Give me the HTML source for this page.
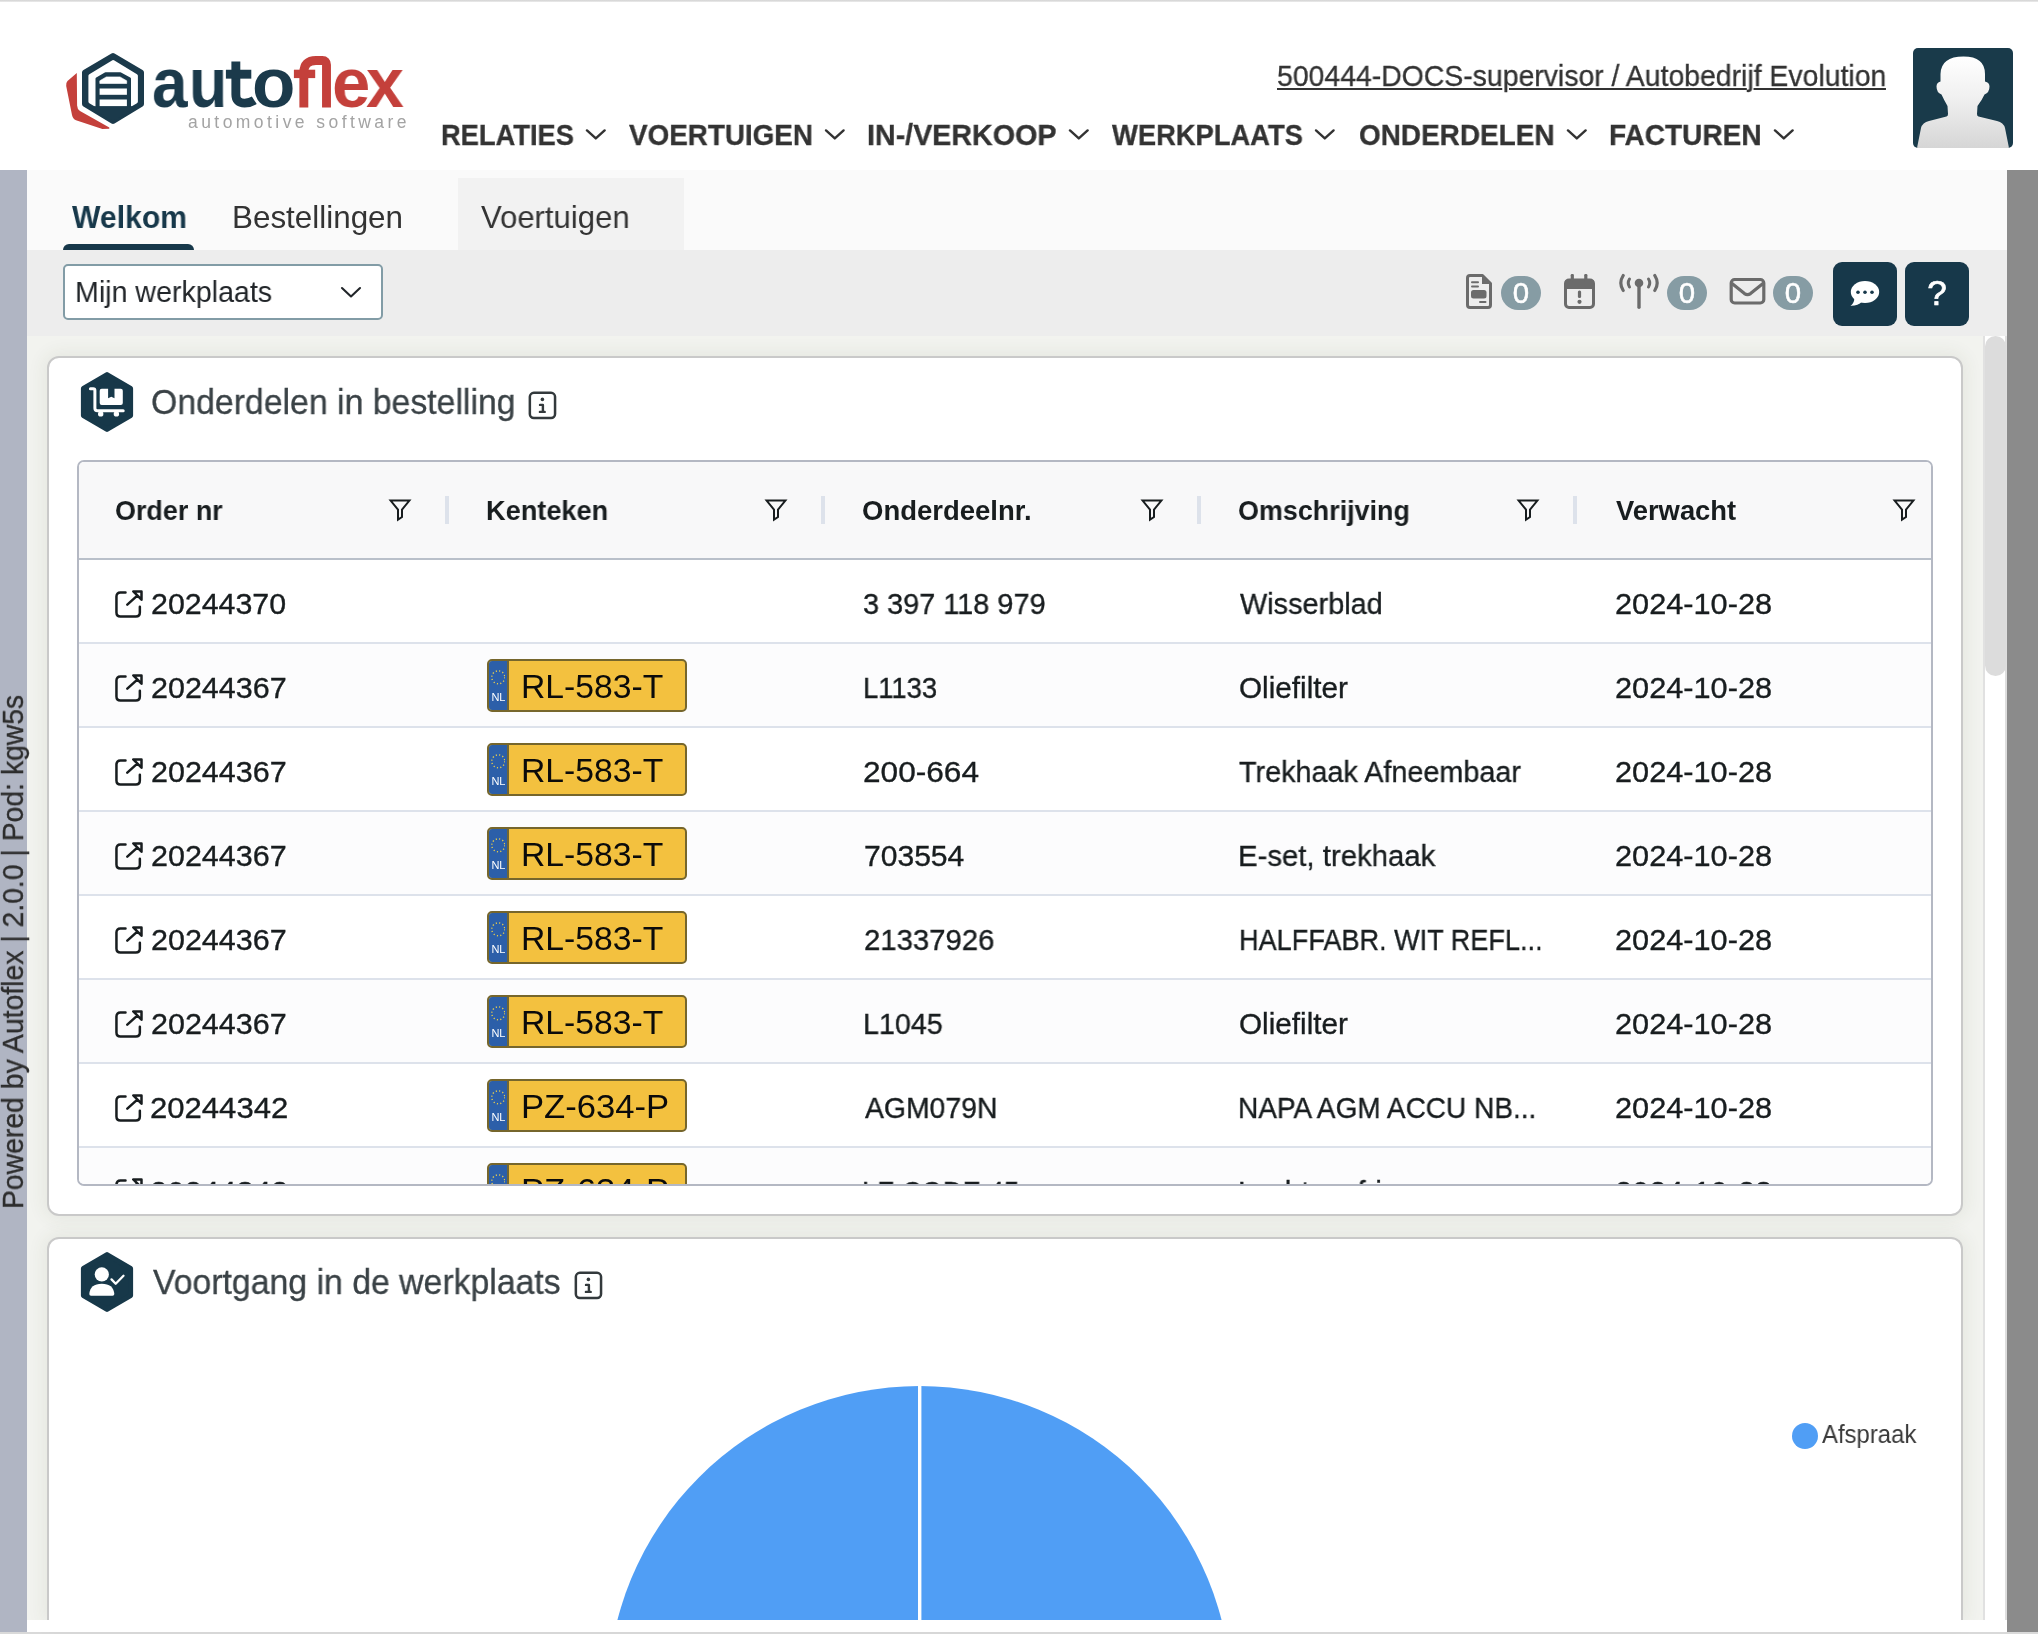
<!DOCTYPE html>
<html lang="nl">
<head>
<meta charset="utf-8">
<title>Autoflex</title>
<style>
*{box-sizing:border-box;margin:0;padding:0}
html,body{width:2038px;height:1634px;overflow:hidden;background:#fff}
body{font-family:"Liberation Sans",sans-serif;color:#333;position:relative}
.abs{position:absolute}
.t,.hc,.c,.pt,.nl{will-change:transform}
.t{position:absolute;white-space:nowrap;line-height:1}
/* frame */
#topline{left:0;top:0;width:2038px;height:2px;background:linear-gradient(#d2d2d2,#ececec)}
#botline{left:0;top:1632px;width:2038px;height:2px;background:#d9d9d9}
#lstrip{left:0;top:170px;width:27px;height:1462px;background:#b0b5c3}
#rstrip{left:2007px;top:170px;width:31px;height:1462px;background:#8b8b8b}
#tabbar{left:27px;top:170px;width:1980px;height:80px;background:#fafafa}
#toolbar{left:27px;top:250px;width:1980px;height:86px;background:#ededed}
#content{left:27px;top:336px;width:1956px;height:1284px;background:#f2f3ef;overflow:hidden}
#sbtrack{left:1983px;top:336px;width:24px;height:1284px;background:#fff;border-left:2px solid #e1e1e1;border-right:2px solid #dedede}
#sbthumb{left:1985px;top:336px;width:21px;height:340px;background:#dcdcdc;border-radius:11px}
.lgl{font-weight:bold;font-size:71px}
#lstrip,#rstrip,#sbtrack,#sbthumb{z-index:2}
#side{z-index:3}
/* nav */
.nav{font-weight:bold;font-size:28.5px;color:#333;top:121px;-webkit-text-stroke:0.3px #333}
.chev{position:absolute;top:127.6px;width:21.6px;height:13px}
/* tabs */
.tab{font-size:30px;top:201px;color:#333}
.badge{width:40px;height:34px;border-radius:17px/17px;background:#869ca4}
.bnum{width:40px;text-align:center;top:277.5px;font-size:29.4px;color:#fff;-webkit-text-stroke:0.5px #fff}
/* panels */
.panel{position:absolute;left:47px;width:1916px;background:#fff;border:2px solid #c9c9c9;border-radius:12px;box-shadow:0 0 18px 3px rgba(70,75,40,0.075)}
.ptitle{font-size:34px;color:#3a4246;-webkit-text-stroke:0.3px #3a4246}
/* table */
#grid{left:77px;top:460px;width:1856px;height:726px;border:2px solid #b4b8c3;border-radius:7px;overflow:hidden;background:#fff}
#ghead{left:0;top:0;width:1852px;height:98px;background:#f8f8f9;border-bottom:2px solid #b9c0ca}
.hc{position:absolute;top:35px;font-weight:bold;font-size:26.5px;color:#181d1f;white-space:nowrap;line-height:1}
.sep{position:absolute;top:34px;width:4px;height:28px;background:#dde2eb}
.flt{position:absolute;top:36px;width:24px;height:24px}
.row{position:absolute;left:0;width:1852px;height:84px;border-bottom:2px solid #dde2eb;background:#fff}
.row.alt{background:#fcfcfd}
.c{position:absolute;top:27px;font-size:28px;color:#181d1f;white-space:nowrap;line-height:1;-webkit-text-stroke:0.35px #181d1f}
.ext{position:absolute;left:35px;top:28.6px;width:30px;height:30px}
.plate{position:absolute;left:408px;top:15px;width:200px;height:53px;background:#f3c13f;border:2px solid #76662c;border-radius:5px;overflow:hidden}
.plate .eu{position:absolute;left:0;top:0;width:20px;height:49px;background:#2c5fa9;border-right:2px solid #6f6636}
.plate .nl{position:absolute;left:0;width:18.6px;text-align:center;top:30.7px;font-size:11px;color:#fff;line-height:1;letter-spacing:-0.3px}
.plate .stars{position:absolute;left:1.7px;top:9.2px;width:14.6px;height:14.6px}
.plate .pt{position:absolute;left:36px;top:8px;font-size:32px;color:#0b0b0b;line-height:1;white-space:nowrap}
</style>
</head>
<body>
<div class="abs" id="topline"></div>
<div class="abs" id="lstrip"></div>
<div class="abs" id="rstrip"></div>
<div class="abs" id="tabbar"></div>
<div class="abs" id="toolbar"></div>
<div class="abs" id="content"></div>
<div class="abs" id="sbtrack"></div>
<div class="abs" id="sbthumb"></div>
<div class="abs" id="botline"></div>


<!-- logo -->
<svg class="abs" style="left:60px;top:45px" width="360" height="95" viewBox="60 45 360 95">
  <path d="M76.8,73.1 L67.5,81 Q65.7,83 66.2,86 L72,115 Q72.8,119 76,120.2 L102.4,129 L109.3,128.7 L109.3,127.6 L80,111 Q77.2,109.3 77.1,105.6 Z" fill="#c4403b"/>
  <polygon points="113,56 141,72.6 141,104 113,121 85,104 85,72.6" fill="#1b3a4b" stroke="#1b3a4b" stroke-width="6" stroke-linejoin="round"/>
  <polygon points="113,62 136,75.8 136,101.6 113,115 90.3,101.6 90.3,75.8" fill="#fff" stroke="#fff" stroke-width="3.8" stroke-linejoin="round"/>
  <polygon points="97,78.8 105.6,73.8 120.3,73.8 129.5,78.8 129.5,111 113,120 97,111" fill="#1b3a4b" stroke="#1b3a4b" stroke-width="3" stroke-linejoin="round"/>
  <polygon points="85,106.2 141,106.2 141,104 113,121 85,104" fill="#1b3a4b"/>
  <polygon points="106.3,76.9 120,76.9 126.7,80.8 126.7,83.5 99.8,83.5 99.8,80.8" fill="#fff" stroke="#fff" stroke-width="0.6" stroke-linejoin="round"/>
  <rect x="99.6" y="88.5" width="27.3" height="6.3" fill="#fff"/>
  <rect x="99.6" y="99.5" width="27.3" height="6.6" fill="#fff"/>
  <g fill="none" stroke-width="8.9">
    <path d="M235.85,61.5 V94.5 Q235.85,103.1 244.6,103.1 Q250,103.1 254.3,100.3" stroke="#1b3a4b"/>
    <path d="M225.9,74.2 H251.3" stroke="#1b3a4b"/>
    <path d="M303.85,107.5 V72.5 Q303.85,60.5 316,60.5 H322.3 Q326.5,60.5 326.5,64.8 V107.5" stroke="#c4403b" stroke-linejoin="round"/>
    <path d="M293.9,73.9 H315.2" stroke="#c4403b" stroke-width="8.4"/>
  </g>
  
</svg>


<div class="t lgl" id="lg_a" style="left:151.6px;top:47.4px;color:#1b3a4b;transform:scaleX(0.9);transform-origin:0 0">a</div>
<div class="t lgl" id="lg_u" style="left:188.7px;top:47.4px;color:#1b3a4b;transform:scaleX(0.883);transform-origin:0 0">u</div>
<div class="t lgl" id="lg_o" style="left:252.4px;top:47.4px;color:#1b3a4b;transform:scaleX(0.995);transform-origin:0 0">o</div>
<div class="t lgl" id="lg_e" style="left:332.2px;top:47.4px;color:#c4403b;transform:scaleX(0.968);transform-origin:0 0">e</div>
<div class="t lgl" id="lg_x" style="left:366.4px;top:47.4px;color:#c4403b;transform:scaleX(0.958);transform-origin:0 0">x</div>
<div class="t" id="lg_sub" style="left:188px;top:113.8px;font-size:17.5px;color:#a3a3a3;letter-spacing:3.44px">automotive software</div>
<div class="t" id="user" style="left:1276.9px;top:60.9px;font-size:29.5px;color:#333;text-decoration:underline;text-decoration-thickness:2px;text-underline-offset:2px;transform:scaleX(0.9626);transform-origin:0 0;-webkit-text-stroke:0.3px #333">500444-DOCS-supervisor / Autobedrijf Evolution</div>

<div class="t nav" id="n1" style="left:441.3px;top:119.7px;font-size:29.9px;transform:scaleX(0.9126);transform-origin:0 0">RELATIES</div>
<div class="t nav" id="n2" style="left:629.0px;top:119.7px;font-size:29.9px;transform:scaleX(0.9311);transform-origin:0 0">VOERTUIGEN</div>
<div class="t nav" id="n3" style="left:867.4px;top:119.7px;font-size:29.9px;transform:scaleX(0.9585);transform-origin:0 0">IN-/VERKOOP</div>
<div class="t nav" id="n4" style="left:1112.3px;top:119.7px;font-size:29.9px;transform:scaleX(0.9149);transform-origin:0 0">WERKPLAATS</div>
<div class="t nav" id="n5" style="left:1359.2px;top:119.7px;font-size:29.9px;transform:scaleX(0.9343);transform-origin:0 0">ONDERDELEN</div>
<div class="t nav" id="n6" style="left:1608.9px;top:119.7px;font-size:29.9px;transform:scaleX(0.9371);transform-origin:0 0">FACTUREN</div>
<svg class="chev" style="left:584.8px" viewBox="0 0 21.6 13"><path d="M2 2.4 L10.8 10.4 L19.6 2.4" fill="none" stroke="#333" stroke-width="2.4" stroke-linecap="round" stroke-linejoin="round"/></svg>
<svg class="chev" style="left:824.0px" viewBox="0 0 21.6 13"><path d="M2 2.4 L10.8 10.4 L19.6 2.4" fill="none" stroke="#333" stroke-width="2.4" stroke-linecap="round" stroke-linejoin="round"/></svg>
<svg class="chev" style="left:1067.8px" viewBox="0 0 21.6 13"><path d="M2 2.4 L10.8 10.4 L19.6 2.4" fill="none" stroke="#333" stroke-width="2.4" stroke-linecap="round" stroke-linejoin="round"/></svg>
<svg class="chev" style="left:1314.2px" viewBox="0 0 21.6 13"><path d="M2 2.4 L10.8 10.4 L19.6 2.4" fill="none" stroke="#333" stroke-width="2.4" stroke-linecap="round" stroke-linejoin="round"/></svg>
<svg class="chev" style="left:1565.7px" viewBox="0 0 21.6 13"><path d="M2 2.4 L10.8 10.4 L19.6 2.4" fill="none" stroke="#333" stroke-width="2.4" stroke-linecap="round" stroke-linejoin="round"/></svg>
<svg class="chev" style="left:1772.7px" viewBox="0 0 21.6 13"><path d="M2 2.4 L10.8 10.4 L19.6 2.4" fill="none" stroke="#333" stroke-width="2.4" stroke-linecap="round" stroke-linejoin="round"/></svg>

<!-- avatar -->
<svg class="abs" style="left:1913px;top:48px" width="100" height="100" viewBox="0 0 100 100">
  <defs>
    <linearGradient id="avg" x1="0" y1="0" x2="0" y2="1"><stop offset="0" stop-color="#ffffff"/><stop offset="0.45" stop-color="#f0f0f0"/><stop offset="1" stop-color="#d6d6d6"/></linearGradient>
    <clipPath id="avc"><rect x="0" y="0" width="100" height="100" rx="5"/></clipPath>
  </defs>
  <g clip-path="url(#avc)">
    <rect width="100" height="100" fill="#193a4a"/>
    <path d="M4,100 L8,80 Q9.5,74.5 16,73 L33.5,68.5 Q35,68 35,66 L34.5,58 Q30.5,51 28.5,46.5 Q23.5,44.5 23.5,38.5 Q23.5,34.5 27.5,33.5 L27.5,26 Q28,8.5 50.5,8.5 Q72,8.5 72,26 L72,33.5 Q76.5,34.5 76.5,38.5 Q76.5,44.5 71.5,46.5 Q69,52 64.5,58 L64,66 Q64,68 65.5,68.5 L84,73 Q90.5,74.5 92,80 L96,100 Z" fill="url(#avg)"/>
  </g>
</svg>


<div class="abs" style="left:458px;top:178px;width:226px;height:72px;background:#f2f2f2"></div>
<div class="t tab" id="tb1" style="left:71.8px;font-weight:bold;color:#17384a;top:202.1px;font-size:31.4px;transform:scaleX(0.961);transform-origin:0 0">Welkom</div>
<div class="t tab" id="tb2" style="left:231.8px;top:202.1px;font-size:31.4px;transform:scaleX(0.9988);transform-origin:0 0">Bestellingen</div>
<div class="t tab" id="tb3" style="left:481.0px;top:202.1px;font-size:31.4px;transform:scaleX(0.9899);transform-origin:0 0">Voertuigen</div>
<div class="abs" style="left:63px;top:244px;width:131px;height:6px;background:#17384a;border-radius:6px 6px 0 0"></div>


<div class="abs" style="left:63px;top:264px;width:320px;height:56px;background:#fff;border:2px solid #829ca6;border-radius:5px"></div>
<div class="t" id="sel" style="left:74.8px;top:277.2px;font-size:29.9px;color:#212529;transform:scaleX(0.9571);transform-origin:0 0">Mijn werkplaats</div>
<svg class="abs" style="left:340px;top:286px" width="22" height="13" viewBox="0 0 22 13"><path d="M2 2 L11 10.5 L20 2" fill="none" stroke="#212529" stroke-width="2.1" stroke-linecap="round" stroke-linejoin="round"/></svg>

<!-- doc icon -->
<svg class="abs" style="left:1465px;top:273px" width="29" height="37" viewBox="0 0 29 37">
  <path d="M5 2.5 H17.5 L25.5 10.5 V32 Q25.5 34.5 23 34.5 H5 Q2.5 34.5 2.5 32 V5 Q2.5 2.5 5 2.5 Z" fill="none" stroke="#6b6b6b" stroke-width="3" stroke-linejoin="round"/>
  <path d="M17 2 L26 11 H17 Z" fill="#6b6b6b"/>
  <rect x="6" y="8.2" width="8" height="2" rx="1" fill="#6b6b6b"/>
  <rect x="6" y="12.5" width="8" height="2" rx="1" fill="#6b6b6b"/>
  <rect x="6" y="17" width="15.5" height="8.5" rx="2.5" fill="#6b6b6b"/>
  <rect x="14" y="28" width="7.5" height="2" rx="1" fill="#6b6b6b"/>
</svg>
<div class="abs badge" style="left:1501px;top:276px"></div><div class="t bnum" id="b1" style="left:1501px">0</div>
<!-- calendar -->
<svg class="abs" style="left:1563px;top:273px" width="33" height="37" viewBox="0 0 33 37">
  <rect x="2.5" y="7" width="28" height="27.5" rx="3.5" fill="none" stroke="#6b6b6b" stroke-width="3"/>
  <rect x="2.5" y="7" width="28" height="9" fill="#6b6b6b"/>
  <rect x="7.7" y="1" width="3.2" height="8" rx="1.2" fill="#6b6b6b"/>
  <rect x="21.2" y="1" width="3.2" height="8" rx="1.2" fill="#6b6b6b"/>
  <rect x="14.9" y="17.5" width="3.2" height="7.5" rx="1.5" fill="#6b6b6b"/>
  <circle cx="16.5" cy="28.8" r="2.1" fill="#6b6b6b"/>
</svg>
<!-- antenna -->
<svg class="abs" style="left:1618px;top:273px" width="42" height="37" viewBox="0 0 42 37">
  <circle cx="21" cy="10" r="4.3" fill="#6b6b6b"/>
  <rect x="19.3" y="10" width="3.4" height="26" rx="1.7" fill="#6b6b6b"/>
  <path d="M5.2 2.5 Q0.4 10 5.2 17.5" fill="none" stroke="#6b6b6b" stroke-width="3.2" stroke-linecap="round"/>
  <path d="M36.8 2.5 Q41.6 10 36.8 17.5" fill="none" stroke="#6b6b6b" stroke-width="3.2" stroke-linecap="round"/>
  <path d="M11.5 6 Q9 10 11.5 14" fill="none" stroke="#6b6b6b" stroke-width="3" stroke-linecap="round"/>
  <path d="M30.5 6 Q33 10 30.5 14" fill="none" stroke="#6b6b6b" stroke-width="3" stroke-linecap="round"/>
</svg>
<div class="abs badge" style="left:1667px;top:276px"></div><div class="t bnum" id="b2" style="left:1667px">0</div>
<!-- envelope -->
<svg class="abs" style="left:1729px;top:277px" width="37" height="29" viewBox="0 0 37 29">
  <rect x="2.2" y="2.5" width="32.6" height="23.5" rx="3.5" fill="none" stroke="#6b6b6b" stroke-width="3.2"/>
  <path d="M3 6.5 L15.5 16.6 Q18.5 18.8 21.5 16.6 L34 6.5" fill="none" stroke="#6b6b6b" stroke-width="3.2" stroke-linejoin="round"/>
</svg>
<div class="abs badge" style="left:1773px;top:276px"></div><div class="t bnum" id="b3" style="left:1773px">0</div>

<div class="abs" style="left:1833px;top:262px;width:64px;height:64px;background:#17384a;border-radius:9px"></div>
<div class="abs" style="left:1905px;top:262px;width:64px;height:64px;background:#17384a;border-radius:9px"></div>
<svg class="abs" style="left:1849px;top:279px" width="32" height="29" viewBox="0 0 32 29">
  <ellipse cx="16" cy="13" rx="14.2" ry="11" fill="#fff"/>
  <path d="M5.5 19 Q5 24.5 1.5 26.8 Q9 27 13 22.5 Z" fill="#fff"/>
  <circle cx="9" cy="13.3" r="1.8" fill="#17384a"/><circle cx="16" cy="13.3" r="1.8" fill="#17384a"/><circle cx="23" cy="13.3" r="1.8" fill="#17384a"/>
</svg>
<div class="t" id="q" style="left:1905px;width:64px;text-align:center;top:274.8px;font-size:35px;color:#fff;-webkit-text-stroke:0.7px #fff">?</div>


<div class="panel" style="top:356px;height:860px"></div>
<svg class="abs" style="left:80px;top:372px" width="54" height="60" viewBox="0 0 54 60">
  <polygon points="27,2.6 50.6,16.5 50.6,43.5 27,57.4 3.4,43.5 3.4,16.5" fill="#173849" stroke="#173849" stroke-width="5" stroke-linejoin="round"/>
  <path d="M10.4 16.8 H13.2 Q14.9 16.8 14.9 18.5 V36.2 Q14.9 38.8 17.5 38.8 H43.2" fill="none" stroke="#fff" stroke-width="3" stroke-linecap="round"/>
  <path d="M21.7 16.8 H28.1 V26.2 L31.3 24.7 L34.5 26.2 V16.8 H40.8 Q42.8 16.8 42.8 18.8 V31 Q42.8 33 40.8 33 H21.7 Q19.7 33 19.7 31 V18.8 Q19.7 16.8 21.7 16.8 Z" fill="#fff"/>
  <circle cx="20.7" cy="41.9" r="2.7" fill="#fff"/><circle cx="36.4" cy="41.9" r="2.7" fill="#fff"/>
</svg>
<div class="t ptitle" id="pt1" style="left:151.0px;top:384.9px;font-size:34.3px;transform:scaleX(0.9855);transform-origin:0 0">Onderdelen in bestelling</div>
<svg class="abs" style="left:528px;top:390.6px" width="29" height="29" viewBox="0 0 29 29"><rect x="1.85" y="1.85" width="25.2" height="25.2" rx="4" fill="none" stroke="#33393c" stroke-width="2.5"/><circle cx="14.4" cy="8.4" r="1.8" fill="#33393c"/><path d="M12 13.9 H14.9 V20.9 M11.9 20.9 H16.7" fill="none" stroke="#33393c" stroke-width="2.4" stroke-linecap="round" stroke-linejoin="round"/></svg>

<div class="abs" id="grid">
  <div class="abs" id="ghead">
    <div class="hc" id="h1" style="left:35.8px;top:35.2px;font-size:27.3px;transform:scaleX(0.9861);transform-origin:0 0">Order nr</div><svg class="flt" style="left:309px" viewBox="0 0 24 24"><path d="M2.6 2.6 H21.4 L14 11.6 V19 L10 21.6 V11.6 Z" fill="none" stroke="#181d1f" stroke-width="2" stroke-linejoin="miter"/></svg><div class="sep" style="left:366px"></div>
    <div class="hc" id="h2" style="left:407.0px;top:35.2px;font-size:27.3px;transform:scaleX(0.9941);transform-origin:0 0">Kenteken</div><svg class="flt" style="left:685px" viewBox="0 0 24 24"><path d="M2.6 2.6 H21.4 L14 11.6 V19 L10 21.6 V11.6 Z" fill="none" stroke="#181d1f" stroke-width="2" stroke-linejoin="miter"/></svg><div class="sep" style="left:742px"></div>
    <div class="hc" id="h3" style="left:783.2px;top:35.2px;font-size:27.3px;transform:scaleX(1.0073);transform-origin:0 0">Onderdeelnr.</div><svg class="flt" style="left:1061px" viewBox="0 0 24 24"><path d="M2.6 2.6 H21.4 L14 11.6 V19 L10 21.6 V11.6 Z" fill="none" stroke="#181d1f" stroke-width="2" stroke-linejoin="miter"/></svg><div class="sep" style="left:1118px"></div>
    <div class="hc" id="h4" style="left:1159.0px;top:35.2px;font-size:27.3px;transform:scaleX(0.9855);transform-origin:0 0">Omschrijving</div><svg class="flt" style="left:1437px" viewBox="0 0 24 24"><path d="M2.6 2.6 H21.4 L14 11.6 V19 L10 21.6 V11.6 Z" fill="none" stroke="#181d1f" stroke-width="2" stroke-linejoin="miter"/></svg><div class="sep" style="left:1494px"></div>
    <div class="hc" id="h5" style="left:1537.0px;top:35.2px;font-size:27.3px;transform:scaleX(1.0025);transform-origin:0 0">Verwacht</div><svg class="flt" style="left:1813px" viewBox="0 0 24 24"><path d="M2.6 2.6 H21.4 L14 11.6 V19 L10 21.6 V11.6 Z" fill="none" stroke="#181d1f" stroke-width="2" stroke-linejoin="miter"/></svg>
  </div>
<div class="row" style="top:98px"><svg class="ext" viewBox="0 0 30 30"><path d="M11.5 3.6 H6.45 Q2.45 3.6 2.45 7.6 V23.4 Q2.45 27.4 6.45 27.4 H21.85 Q25.85 27.4 25.85 23.4 V17.7" fill="none" stroke="#181d1f" stroke-width="2.5" stroke-linecap="round"/><path d="M13.3 15.7 L23.3 6.6 M19.3 2.4 H27.5 V10.7 Z" fill="none" stroke="#181d1f" stroke-width="2.5" stroke-linecap="round" stroke-linejoin="round"/></svg><div class="c" id="o0" style="left:72.0px;top:29.1px;font-size:29.7px;transform:scaleX(1.0231);transform-origin:0 0">20244370</div><div class="c" id="n0x" style="left:784.4px;top:29.1px;font-size:29.7px;transform:scaleX(0.973);transform-origin:0 0">3 397 118 979</div><div class="c" id="d0" style="left:1161.0px;top:29.1px;font-size:29.7px;transform:scaleX(0.9724);transform-origin:0 0">Wisserblad</div><div class="c" id="v0" style="left:1535.9px;top:29.1px;font-size:29.7px;transform:scaleX(1.034);transform-origin:0 0">2024-10-28</div></div>
<div class="row alt" style="top:182px"><svg class="ext" viewBox="0 0 30 30"><path d="M11.5 3.6 H6.45 Q2.45 3.6 2.45 7.6 V23.4 Q2.45 27.4 6.45 27.4 H21.85 Q25.85 27.4 25.85 23.4 V17.7" fill="none" stroke="#181d1f" stroke-width="2.5" stroke-linecap="round"/><path d="M13.3 15.7 L23.3 6.6 M19.3 2.4 H27.5 V10.7 Z" fill="none" stroke="#181d1f" stroke-width="2.5" stroke-linecap="round" stroke-linejoin="round"/></svg><div class="c" id="o1" style="left:72.0px;top:29.1px;font-size:29.7px;transform:scaleX(1.0269);transform-origin:0 0">20244367</div><div class="plate"><div class="eu"></div><svg class="stars" viewBox="0 0 14.6 14.6"><circle cx="7.3" cy="7.3" r="6.5" fill="none" stroke="#e2c94f" stroke-width="1.4" stroke-dasharray="1.2 2.203" stroke-linecap="butt"/></svg><div class="nl">NL</div><div class="pt" id="p1" style="left:32.3px;top:8.8px;font-size:33.3px;transform:scaleX(1.0117);transform-origin:0 0">RL-583-T</div></div><div class="c" id="n1x" style="left:783.8px;top:29.1px;font-size:29.7px;transform:scaleX(0.9234);transform-origin:0 0">L1133</div><div class="c" id="d1" style="left:1160.2px;top:29.1px;font-size:29.7px;transform:scaleX(1.0009);transform-origin:0 0">Oliefilter</div><div class="c" id="v1" style="left:1535.9px;top:29.1px;font-size:29.7px;transform:scaleX(1.034);transform-origin:0 0">2024-10-28</div></div>
<div class="row" style="top:266px"><svg class="ext" viewBox="0 0 30 30"><path d="M11.5 3.6 H6.45 Q2.45 3.6 2.45 7.6 V23.4 Q2.45 27.4 6.45 27.4 H21.85 Q25.85 27.4 25.85 23.4 V17.7" fill="none" stroke="#181d1f" stroke-width="2.5" stroke-linecap="round"/><path d="M13.3 15.7 L23.3 6.6 M19.3 2.4 H27.5 V10.7 Z" fill="none" stroke="#181d1f" stroke-width="2.5" stroke-linecap="round" stroke-linejoin="round"/></svg><div class="c" id="o2" style="left:72.0px;top:29.1px;font-size:29.7px;transform:scaleX(1.0269);transform-origin:0 0">20244367</div><div class="plate"><div class="eu"></div><svg class="stars" viewBox="0 0 14.6 14.6"><circle cx="7.3" cy="7.3" r="6.5" fill="none" stroke="#e2c94f" stroke-width="1.4" stroke-dasharray="1.2 2.203" stroke-linecap="butt"/></svg><div class="nl">NL</div><div class="pt" id="p2" style="left:32.3px;top:8.8px;font-size:33.3px;transform:scaleX(1.0117);transform-origin:0 0">RL-583-T</div></div><div class="c" id="n2x" style="left:784.2px;top:29.1px;font-size:29.7px;transform:scaleX(1.0645);transform-origin:0 0">200-664</div><div class="c" id="d2" style="left:1160.4px;top:29.1px;font-size:29.7px;transform:scaleX(0.9692);transform-origin:0 0">Trekhaak Afneembaar</div><div class="c" id="v2" style="left:1535.9px;top:29.1px;font-size:29.7px;transform:scaleX(1.034);transform-origin:0 0">2024-10-28</div></div>
<div class="row alt" style="top:350px"><svg class="ext" viewBox="0 0 30 30"><path d="M11.5 3.6 H6.45 Q2.45 3.6 2.45 7.6 V23.4 Q2.45 27.4 6.45 27.4 H21.85 Q25.85 27.4 25.85 23.4 V17.7" fill="none" stroke="#181d1f" stroke-width="2.5" stroke-linecap="round"/><path d="M13.3 15.7 L23.3 6.6 M19.3 2.4 H27.5 V10.7 Z" fill="none" stroke="#181d1f" stroke-width="2.5" stroke-linecap="round" stroke-linejoin="round"/></svg><div class="c" id="o3" style="left:72.0px;top:29.1px;font-size:29.7px;transform:scaleX(1.0269);transform-origin:0 0">20244367</div><div class="plate"><div class="eu"></div><svg class="stars" viewBox="0 0 14.6 14.6"><circle cx="7.3" cy="7.3" r="6.5" fill="none" stroke="#e2c94f" stroke-width="1.4" stroke-dasharray="1.2 2.203" stroke-linecap="butt"/></svg><div class="nl">NL</div><div class="pt" id="p3" style="left:32.3px;top:8.8px;font-size:33.3px;transform:scaleX(1.0117);transform-origin:0 0">RL-583-T</div></div><div class="c" id="n3x" style="left:784.6px;top:29.1px;font-size:29.7px;transform:scaleX(1.0124);transform-origin:0 0">703554</div><div class="c" id="d3" style="left:1159.4px;top:29.1px;font-size:29.7px;transform:scaleX(0.9883);transform-origin:0 0">E-set, trekhaak</div><div class="c" id="v3" style="left:1535.9px;top:29.1px;font-size:29.7px;transform:scaleX(1.034);transform-origin:0 0">2024-10-28</div></div>
<div class="row" style="top:434px"><svg class="ext" viewBox="0 0 30 30"><path d="M11.5 3.6 H6.45 Q2.45 3.6 2.45 7.6 V23.4 Q2.45 27.4 6.45 27.4 H21.85 Q25.85 27.4 25.85 23.4 V17.7" fill="none" stroke="#181d1f" stroke-width="2.5" stroke-linecap="round"/><path d="M13.3 15.7 L23.3 6.6 M19.3 2.4 H27.5 V10.7 Z" fill="none" stroke="#181d1f" stroke-width="2.5" stroke-linecap="round" stroke-linejoin="round"/></svg><div class="c" id="o4" style="left:72.0px;top:29.1px;font-size:29.7px;transform:scaleX(1.0269);transform-origin:0 0">20244367</div><div class="plate"><div class="eu"></div><svg class="stars" viewBox="0 0 14.6 14.6"><circle cx="7.3" cy="7.3" r="6.5" fill="none" stroke="#e2c94f" stroke-width="1.4" stroke-dasharray="1.2 2.203" stroke-linecap="butt"/></svg><div class="nl">NL</div><div class="pt" id="p4" style="left:32.3px;top:8.8px;font-size:33.3px;transform:scaleX(1.0117);transform-origin:0 0">RL-583-T</div></div><div class="c" id="n4x" style="left:784.6px;top:29.1px;font-size:29.7px;transform:scaleX(0.9877);transform-origin:0 0">21337926</div><div class="c" id="d4" style="left:1159.7px;top:29.1px;font-size:29.7px;transform:scaleX(0.9125);transform-origin:0 0">HALFFABR. WIT REFL...</div><div class="c" id="v4" style="left:1535.9px;top:29.1px;font-size:29.7px;transform:scaleX(1.034);transform-origin:0 0">2024-10-28</div></div>
<div class="row alt" style="top:518px"><svg class="ext" viewBox="0 0 30 30"><path d="M11.5 3.6 H6.45 Q2.45 3.6 2.45 7.6 V23.4 Q2.45 27.4 6.45 27.4 H21.85 Q25.85 27.4 25.85 23.4 V17.7" fill="none" stroke="#181d1f" stroke-width="2.5" stroke-linecap="round"/><path d="M13.3 15.7 L23.3 6.6 M19.3 2.4 H27.5 V10.7 Z" fill="none" stroke="#181d1f" stroke-width="2.5" stroke-linecap="round" stroke-linejoin="round"/></svg><div class="c" id="o5" style="left:72.0px;top:29.1px;font-size:29.7px;transform:scaleX(1.0269);transform-origin:0 0">20244367</div><div class="plate"><div class="eu"></div><svg class="stars" viewBox="0 0 14.6 14.6"><circle cx="7.3" cy="7.3" r="6.5" fill="none" stroke="#e2c94f" stroke-width="1.4" stroke-dasharray="1.2 2.203" stroke-linecap="butt"/></svg><div class="nl">NL</div><div class="pt" id="p5" style="left:32.3px;top:8.8px;font-size:33.3px;transform:scaleX(1.0117);transform-origin:0 0">RL-583-T</div></div><div class="c" id="n5x" style="left:783.6px;top:29.1px;font-size:29.7px;transform:scaleX(0.9658);transform-origin:0 0">L1045</div><div class="c" id="d5" style="left:1160.2px;top:29.1px;font-size:29.7px;transform:scaleX(1.0009);transform-origin:0 0">Oliefilter</div><div class="c" id="v5" style="left:1535.9px;top:29.1px;font-size:29.7px;transform:scaleX(1.034);transform-origin:0 0">2024-10-28</div></div>
<div class="row" style="top:602px"><svg class="ext" viewBox="0 0 30 30"><path d="M11.5 3.6 H6.45 Q2.45 3.6 2.45 7.6 V23.4 Q2.45 27.4 6.45 27.4 H21.85 Q25.85 27.4 25.85 23.4 V17.7" fill="none" stroke="#181d1f" stroke-width="2.5" stroke-linecap="round"/><path d="M13.3 15.7 L23.3 6.6 M19.3 2.4 H27.5 V10.7 Z" fill="none" stroke="#181d1f" stroke-width="2.5" stroke-linecap="round" stroke-linejoin="round"/></svg><div class="c" id="o6" style="left:70.9px;top:29.1px;font-size:29.7px;transform:scaleX(1.0465);transform-origin:0 0">20244342</div><div class="plate"><div class="eu"></div><svg class="stars" viewBox="0 0 14.6 14.6"><circle cx="7.3" cy="7.3" r="6.5" fill="none" stroke="#e2c94f" stroke-width="1.4" stroke-dasharray="1.2 2.203" stroke-linecap="butt"/></svg><div class="nl">NL</div><div class="pt" id="p6" style="left:31.6px;top:8.8px;font-size:33.3px;transform:scaleX(1.0399);transform-origin:0 0">PZ-634-P</div></div><div class="c" id="n6x" style="left:785.6px;top:29.1px;font-size:29.7px;transform:scaleX(0.9551);transform-origin:0 0">AGM079N</div><div class="c" id="d6" style="left:1159.4px;top:29.1px;font-size:29.7px;transform:scaleX(0.9433);transform-origin:0 0">NAPA AGM ACCU NB...</div><div class="c" id="v6" style="left:1535.9px;top:29.1px;font-size:29.7px;transform:scaleX(1.034);transform-origin:0 0">2024-10-28</div></div>
<div class="row alt" style="top:686px"><svg class="ext" viewBox="0 0 30 30"><path d="M11.5 3.6 H6.45 Q2.45 3.6 2.45 7.6 V23.4 Q2.45 27.4 6.45 27.4 H21.85 Q25.85 27.4 25.85 23.4 V17.7" fill="none" stroke="#181d1f" stroke-width="2.5" stroke-linecap="round"/><path d="M13.3 15.7 L23.3 6.6 M19.3 2.4 H27.5 V10.7 Z" fill="none" stroke="#181d1f" stroke-width="2.5" stroke-linecap="round" stroke-linejoin="round"/></svg><div class="c" id="o7" style="left:70.9px;top:29.1px;font-size:29.7px;transform:scaleX(1.0465);transform-origin:0 0">20244342</div><div class="plate"><div class="eu"></div><svg class="stars" viewBox="0 0 14.6 14.6"><circle cx="7.3" cy="7.3" r="6.5" fill="none" stroke="#e2c94f" stroke-width="1.4" stroke-dasharray="1.2 2.203" stroke-linecap="butt"/></svg><div class="nl">NL</div><div class="pt" id="p7" style="left:31.6px;top:8.8px;font-size:33.3px;transform:scaleX(1.0399);transform-origin:0 0">PZ-634-P</div></div><div class="c" id="n7x" style="left:783.0px;top:29.1px;font-size:29.7px;transform:scaleX(0.9246);transform-origin:0 0">LF CODE 45</div><div class="c" id="d7" style="left:1159.3px;top:29.1px;font-size:29.7px;transform:scaleX(0.9795);transform-origin:0 0">Lucht verfrisser</div><div class="c" id="v7" style="left:1535.9px;top:29.1px;font-size:29.7px;transform:scaleX(1.034);transform-origin:0 0">2024-10-28</div></div>

</div>


<div class="panel" style="top:1237px;height:383px;border-bottom:none;border-radius:12px 12px 0 0"></div>
<div class="abs" style="left:27px;top:1620px;width:1980px;height:12px;background:#fff"></div>
<svg class="abs" style="left:80px;top:1252px" width="54" height="60" viewBox="0 0 54 60">
  <polygon points="27,2.6 50.6,16.5 50.6,43.5 27,57.4 3.4,43.5 3.4,16.5" fill="#173849" stroke="#173849" stroke-width="5" stroke-linejoin="round"/>
  <circle cx="21.8" cy="22.4" r="7.1" fill="#fff"/>
  <path d="M9.3 42 Q10.2 31.7 21.8 31.7 Q33.4 31.7 34.3 42 Q34.3 43.7 32.6 43.7 H11 Q9.3 43.7 9.3 42 Z" fill="#fff"/>
  <path d="M31.5 27.4 L35.7 31.7 L43.5 23.7" fill="none" stroke="#fff" stroke-width="2.3" stroke-linecap="round" stroke-linejoin="round"/>
</svg>
<div class="t ptitle" id="pt2" style="left:152.8px;top:1264.6px;font-size:34.3px;transform:scaleX(0.9854);transform-origin:0 0">Voortgang in de werkplaats</div>
<svg class="abs" style="left:573.6px;top:1270.6px" width="29" height="29" viewBox="0 0 29 29"><rect x="1.85" y="1.85" width="25.2" height="25.2" rx="4" fill="none" stroke="#33393c" stroke-width="2.5"/><circle cx="14.4" cy="8.4" r="1.8" fill="#33393c"/><path d="M12 13.9 H14.9 V20.9 M11.9 20.9 H16.7" fill="none" stroke="#33393c" stroke-width="2.4" stroke-linecap="round" stroke-linejoin="round"/></svg>
<svg class="abs" style="left:560px;top:1380px" width="720" height="240" viewBox="560 1380 720 240">
  <circle cx="919.5" cy="1698" r="312" fill="#509ef5"/>
  <rect x="918" y="1380" width="3.4" height="240" fill="#fff"/>
</svg>
<div class="abs" style="left:1791.8px;top:1422.8px;width:26.2px;height:26.2px;border-radius:50%;background:#509ef5"></div>
<div class="t" id="leg" style="left:1822.0px;top:1421.7px;font-size:25.0px;color:#3a3a3a;transform:scaleX(0.9561);transform-origin:0 0">Afspraak</div>


<div class="t" id="side" style="left:-1.4px;top:1209px;font-size:29px;color:#2d2d2d;transform-origin:0 0;transform:rotate(-90deg) scaleX(0.9774);-webkit-text-stroke:0.3px #2d2d2d">Powered by Autoflex | 2.0.0 | Pod: kgw5s</div>

</body>
</html>
